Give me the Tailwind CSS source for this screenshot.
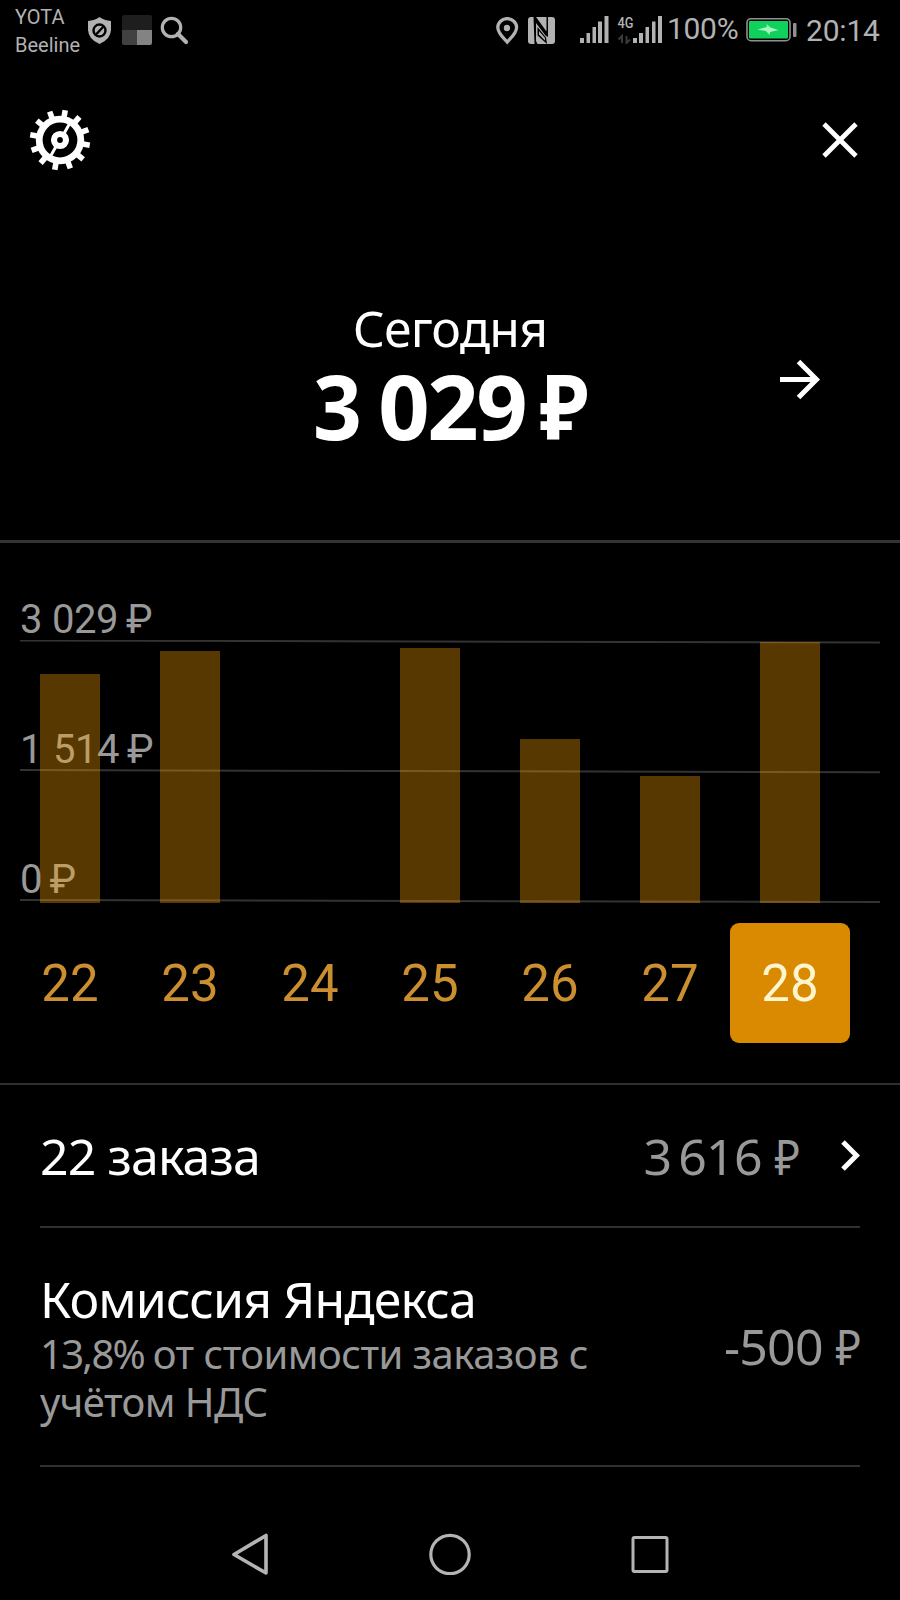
<!DOCTYPE html>
<html lang="ru">
<head>
    <meta charset="UTF-8">
    <meta name="viewport" content="width=device-width, initial-scale=1.0">
    <title>Заработок за день</title>

    <!-- Tailwind CSS for styling -->
    <script src="https://cdn.jsdelivr.net/npm/@tailwindcss/browser@4"></script>
</head>
<body class="bg-black">

    <div class="flex h-[1600px] w-[900px] flex-col overflow-hidden bg-black font-['Noto_Sans',sans-serif] text-white">

        <!-- ===== Status bar ===== -->
        <div class="flex h-16 shrink-0 items-start font-[Roboto,sans-serif] whitespace-nowrap text-[#b2b2b2]">
            <div class="w-[88px] pt-[3px] pl-[15px] text-[20px] leading-7">
                <p>YOTA</p>
                <p>Beeline</p>
            </div>
            <!-- Shield -->
            <svg class="mt-[17px] h-[27px] w-[24px]" viewBox="0 0 24 27" fill="none">
                <path d="M11.500 0Q16 3.500 23 4V13Q22.500 22.500 11.500 27Q.5 22.500 0 13V4Q7 3.500 11.500 0Z" fill="currentColor"/>
                <circle cx="11.500" cy="13.500" r="6" stroke="#000" stroke-width="2.400"/>
                <path d="M8 17.500L15.500 9.500" stroke="#000" stroke-width="2.400"/>
            </svg>
            <!-- Blurred app icon -->
            <div class="mt-[15px] ml-[10px] grid size-[30px] grid-cols-2 grid-rows-2 overflow-hidden rounded-[2px]">
                <div class="col-span-2 bg-[#1e1e1e]"></div>
                <div class="bg-[#414141]"></div>
                <div class="bg-[#838383]"></div>
            </div>
            <!-- Search -->
            <svg class="mt-[16px] ml-[8px] h-[29px] w-[30px]" viewBox="0 0 30 29" fill="none" stroke="currentColor">
                <circle cx="11.500" cy="11.500" r="9.200" stroke-width="3.200"/>
                <path d="M18 18L26 26" stroke-width="4.200" stroke-linecap="round"/>
            </svg>

            <!-- Location -->
            <svg class="mt-[17px] ml-[306px] h-[28px] w-[23px]" viewBox="0 0 23 28" fill="none">
                <path d="M11.200 25C7 20.500 1.800 16 1.800 10.500A9.300 8.800 0 0 1 20.600 10.500C20.600 16 15.500 20.500 11.200 25Z" stroke="currentColor" stroke-width="3.300"/>
                <circle cx="11" cy="11" r="3.200" fill="currentColor"/>
            </svg>
            <!-- NFC -->
            <svg class="mt-[17px] ml-[9px] h-[27px] w-[27px]" viewBox="0 0 27 27" fill="none">
                <rect width="27" height="27" rx="3" fill="currentColor"/>
                <path d="M5.500 0H8L18.500 14.500V0H20V20L17.500 18.500L8 6V24L9.500 27H6.500Z" fill="#000"/>
                <path d="M9.500 10L18 20.500L19 27L9.500 18.500Z" fill="#000"/>
                <path d="M11 14L17 21V23.500L11 17.500Z" fill="currentColor"/>
            </svg>
            <!-- Signal, first SIM -->
            <svg class="mt-[16px] ml-[24px] h-[27px] w-[30px]" viewBox="0 0 30 27" fill="currentColor">
                <path d="M1 22h4v5H1zM7.500 17h3.500v10H7.500zM13.500 11h3.500v16h-3.500zM19 5.500h4V27h-4zM25.500 0h4v27h-4z"/>
            </svg>
            <!-- Signal, second SIM -->
            <svg class="mt-[14px] ml-[8px] h-[30px] w-[46px]" viewBox="0 0 46 30" fill="currentColor">
                <text x="0.500" y="14" font-family="Roboto, sans-serif" font-size="15" font-weight="500" textLength="16" lengthAdjust="spacingAndGlyphs">4G</text>
                <path d="M5 29V22L1.500 25.500M9.500 22V29L13 25.500" fill="none" stroke="#3a3a3a" stroke-width="2"/>
                <path d="M16 24h4v5h-4zM22 19h4v10h-4zM28.500 13h3.500v16h-3.500zM35 7.500h3.500V29H35zM41 2h4v27h-4z"/>
            </svg>
            <span class="mt-[9px] ml-[4px] w-[79px] text-[30px] leading-10 tracking-[-0.3px]">100%</span>
            <!-- Battery -->
            <svg class="mt-[17px] h-[25px] w-[51px]" viewBox="0 0 51 25" fill="none">
                <rect x="1" y="1.700" width="43" height="22" rx="4" stroke="#909090" stroke-width="1.600"/>
                <rect x="3" y="4" width="39" height="17.500" rx="1" fill="#0fd25c"/>
                <path d="M11.500 12.500L21 10L20.500 7L24.500 10.500L32.500 13L24 15L23.500 18L20 14Z" fill="#a9f3c0"/>
                <rect x="47" y="6" width="3.500" height="14" rx="1" fill="#909090"/>
            </svg>
            <span class="mt-[11px] ml-[9px] text-[30px] leading-10 tracking-[-0.2px]">20:14</span>
        </div>

        <!-- ===== Toolbar ===== -->
        <div class="flex h-[152px] shrink-0 items-center justify-between pr-[40px] pl-[29px]">
            <svg class="size-[62px]" viewBox="-31 -31 62 62" fill="none" stroke="#fff">
                <circle r="20.800" stroke-width="6.800"/>
                <g id="gear" stroke-width="5.600"></g>
                <circle r="6" stroke-width="6.200"/>
                <path d="M4 -6.500L10.500 -18M-4 6.500L-10.500 18" stroke-width="3"/>
            </svg>
            <svg class="size-10" viewBox="0 0 40 40" fill="none" stroke="#fff" stroke-width="4.800">
                <path d="M4 4L36 36M36 4L4 36"/>
            </svg>
        </div>

        <!-- ===== Day total ===== -->
        <div class="flex h-[327px] shrink-0 items-start border-b-3 border-[#333]">
            <div class="ml-[250px] flex w-[400px] flex-col items-center pt-[82px] whitespace-nowrap">
                <p class="text-[50px] leading-[60px] tracking-[-0.8px]">Сегодня</p>
                <p class="mt-[-3px] flex text-[90px] leading-[100px] font-bold tracking-[-2.500px]">
                    <span class="origin-left scale-x-95">3</span><span class="ml-[16px]">029</span><span class="ml-[10px] origin-[47px] scale-x-90">₽</span>
                </p>
            </div>
            <svg class="mt-[142px] ml-[129px] h-[43px] w-[43px]" viewBox="0 0 43 43" fill="none" stroke="#fff" stroke-width="5">
                <path d="M1 21.500H38M19.500 3.500L37.500 21.500L19.500 39.500"/>
            </svg>
        </div>

        <!-- ===== Chart ===== -->
        <div class="flex h-[542px] shrink-0 flex-col border-b-2 border-[#303030] font-[Roboto,sans-serif]">
            <div class="relative mt-[97px] h-[263px] w-full">
                <!-- Scale labels and grid lines -->
                <div class="absolute top-[-40px] left-[20px] text-[40px] leading-10 whitespace-nowrap text-[#999]">
                    <p class="flex h-[130px] tracking-[-0.500px]">3<span class="ml-[10px]">029</span><span class="ml-[8px]">₽</span></p>
                    <p class="flex h-[130px] tracking-[-0.500px]">1<span class="ml-[11px]">514</span><span class="ml-[8px]">₽</span></p>
                    <p class="flex h-[40px]">0<span class="ml-[7px]">₽</span></p>
                </div>
                <svg class="absolute inset-0 h-[263px] w-[900px]" viewBox="0 0 900 263" stroke="#333" stroke-width="2">
                    <path d="M20 .5L880 2.500M20 130L880 132.300M20 260L880 262"/>
                </svg>
                <!-- Bars, tinted over the labels -->
                <div id="bars" class="relative flex h-full items-end gap-[60px] pl-[40px]"></div>
            </div>
            <div id="days" class="mt-[20px] flex pl-[10px]"></div>
        </div>

        <!-- ===== Details ===== -->
        <div class="mx-10 flex h-[143px] shrink-0 items-center border-b-2 border-[#303030] whitespace-nowrap">
            <p class="text-[50px] leading-[60px] tracking-[-0.900px]">22 заказа</p>
            <p class="ml-auto flex text-[50px] leading-[60px] tracking-[-0.800px] text-[#999]">
                <span>3</span><span class="ml-[7px]">616</span><span class="ml-[9px] origin-right scale-x-88">₽</span>
            </p>
            <svg class="ml-[40px] h-[31px] w-[21px]" viewBox="0 0 21 31" fill="none" stroke="#fff" stroke-width="5">
                <path d="M4 2L17.500 15.500L4 29"/>
            </svg>
        </div>
        <div class="mx-10 flex h-[239px] shrink-0 items-start justify-between border-b-2 border-[#303030] whitespace-nowrap">
            <div class="pt-[41px]">
                <p class="text-[50px] leading-[60px] tracking-[-0.850px]">Комиссия Яндекса</p>
                <p class="mt-[1px] text-[40px] leading-[48px] tracking-[-0.550px] text-[#999]"><span class="tracking-[-1.700px]">13,8% </span>от стоимости заказов с<br>учётом НДС</p>
            </div>
            <p class="mt-[88px] flex text-[50px] leading-[60px] tracking-[-0.800px] text-[#999]">
                <span>-500</span><span class="ml-[9px] origin-right scale-x-88">₽</span>
            </p>
        </div>

        <!-- ===== Navigation ===== -->
        <div class="flex h-[133px] shrink-0 items-center pt-[41px] pl-[229px] text-[#b4b4b4]">
            <svg class="size-[42px]" viewBox="0 0 42 42" fill="none" stroke="currentColor" stroke-width="3.600" stroke-linejoin="round">
                <path d="M5 21.500L37 2.500V40Z"/>
            </svg>
            <svg class="ml-[158px] size-[42px]" viewBox="0 0 42 42" fill="none" stroke="currentColor" stroke-width="3.200">
                <circle cx="21" cy="21.500" r="19.200"/>
            </svg>
            <svg class="ml-[158px] size-[42px]" viewBox="0 0 42 42" fill="none" stroke="currentColor" stroke-width="3">
                <rect x="4" y="4.500" width="34" height="34" rx="1.500"/>
            </svg>
        </div>
    </div>

    <script>
        // Bar height in pixels for each day
        const days = [
            { day: 22, height: 229 },
            { day: 23, height: 252 },
            { day: 24, height: 0 },
            { day: 25, height: 255 },
            { day: 26, height: 164 },
            { day: 27, height: 127 },
            { day: 28, height: 261, active: true }
        ];

        document.getElementById('bars').innerHTML = days.map(d =>
            `<div class="w-[60px] bg-[#ffa500]/34" style="height: ${d.height}px"></div>`
        ).join('');

        document.getElementById('days').innerHTML = days.map(d => {
            const color = d.active ? 'bg-[#d98a00] text-[#fff6cf]' : 'text-[#cc8f30]';
            return `<div class="flex size-[120px] items-center justify-center rounded-[9px] pt-[2px] text-[51px] ${color}">${d.day}</div>`;
        }).join('');

        // Twelve teeth round the gear
        let teeth = '';
        for (let i = 0; i < 12; i++) {
            teeth += `<path d="M22 0H30.200" transform="rotate(${10 + i * 30})"/>`;
        }
        document.getElementById('gear').innerHTML = teeth;
    </script>
</body>
</html>
